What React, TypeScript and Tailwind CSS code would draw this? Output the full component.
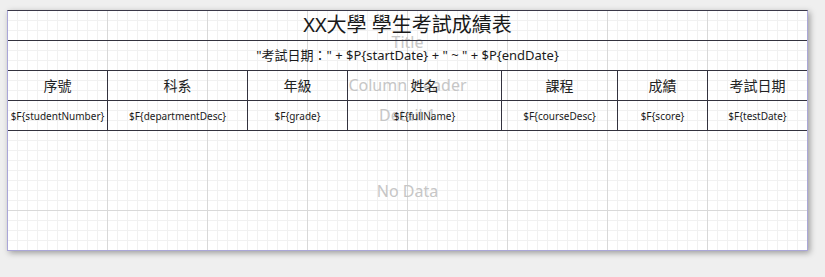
import React from "react";

const cols = [
  { h: "序號", d: "$F{studentNumber}", w: "w-[100px] border-r" },
  { h: "科系", d: "$F{departmentDesc}", w: "w-[140px] border-r" },
  { h: "年級", d: "$F{grade}", w: "w-[100px] border-r" },
  { h: "姓名", d: "$F{fullName}", w: "w-[154px] border-r" },
  { h: "課程", d: "$F{courseDesc}", w: "w-[116px] border-r" },
  { h: "成績", d: "$F{score}", w: "w-[90px] border-r" },
  { h: "考試日期", d: "$F{testDate}", w: "w-[99px]" },
];

const font = "font-['Noto_Sans','Noto_Sans_CJK_TC',sans-serif]";

function Grid() {
  const vx = Array.from({ length: 80 }, (_, i) => i * 10 + 9.5);
  const hy = Array.from({ length: 24 }, (_, i) => i * 10 + 9.5);
  return (
    <svg className="absolute left-0 top-0" width="799" height="239" aria-hidden>
      {vx.map((x) => (
        <line key={"mx" + x} x1={x} y1={0} x2={x} y2={239} stroke="#f1f1f1" strokeWidth="1" />
      ))}
      {hy.map((y) => (
        <line key={"my" + y} x1={0} y1={y} x2={799} y2={y} stroke="#f1f1f1" strokeWidth="1" />
      ))}
      {[1, 2, 3, 4, 5, 6, 7].map((i) => (
        <line key={"v" + i} x1={i * 100 - 0.5} y1={0} x2={i * 100 - 0.5} y2={239} stroke="#d9d9d9" strokeWidth="1" />
      ))}
      <line x1={0} y1={199.5} x2={799} y2={199.5} stroke="#d9d9d9" strokeWidth="1" />
    </svg>
  );
}

export default function App() {
  return (
    <div className={`w-[825px] h-[277px] bg-[#efefef] pt-[10px] pl-[7px] ${font}`}>
      <div className="relative w-[801px] h-[241px] bg-white border border-[#aaa6d8] border-t-[#3a3848] shadow-[2px_2px_6px_rgba(0,0,0,0.35)]">
        <Grid />
        {/* band labels */}
        <div className="absolute left-0 top-0 w-[799px] h-[239px] flex flex-col text-[16px] text-[#c6c6c6] leading-none">
          <div className="h-[59px] flex items-center justify-center pt-[2px]">Title</div>
          <div className="h-[30px] flex items-center justify-center">Column Header</div>
          <div className="h-[30px] flex items-center justify-center">Detail 1</div>
          <div className="flex-1 flex items-center justify-center pt-[2px]">No Data</div>
        </div>
        {/* table */}
        <div className="relative flex flex-col text-[#1a1a1a]">
          <div className="h-[30px] border-b border-[#33323f] flex items-center justify-center text-[20px] leading-none pb-[2px]">
            XX大學 學生考試成績表
          </div>
          <div className="h-[30px] border-b border-[#33323f] flex items-center justify-center text-[13px] leading-none">
            "考試日期：" + $P{"{"}startDate{"}"} + " ~ " + $P{"{"}endDate{"}"}
          </div>
          <div className="h-[30px] border-b border-[#33323f] flex text-[14px] leading-none text-[#222]">
            {cols.map((c) => (
              <div key={c.h} className={`${c.w} border-[#33323f] flex items-center justify-center`}>
                {c.h}
              </div>
            ))}
          </div>
          <div className="h-[30px] border-b border-[#33323f] flex text-[10px] leading-none">
            {cols.map((c) => (
              <div key={c.d} className={`${c.w} border-[#33323f] flex items-center justify-center`}>
                {c.d}
              </div>
            ))}
          </div>
        </div>
      </div>
    </div>
  );
}
